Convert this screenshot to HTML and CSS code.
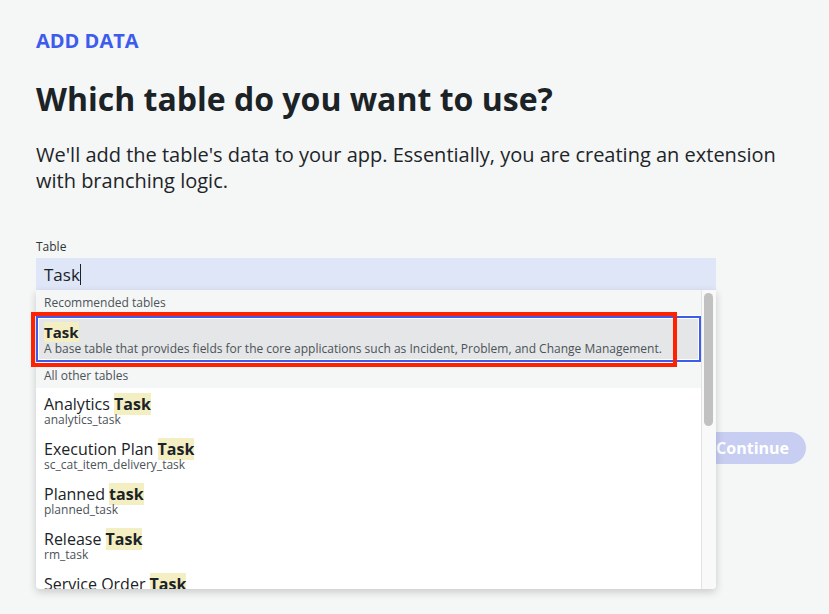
FILE: index.html
```html
<!DOCTYPE html>
<html>
<head>
<meta charset="utf-8">
<link rel="stylesheet" href="styles.css">
</head>
<body>
<main class="page">
  <div class="eyebrow">ADD DATA</div>
  <h1 class="title">Which table do you want to use?</h1>
  <p class="lead">We'll add the table's data to your app. Essentially, you are creating an extension with branching logic.</p>

  <div class="field">
    <label class="label">Table</label>
    <div class="combo">
      <div class="input"><span class="value">Task</span><span class="caret"></span></div>
      <div class="menu">
        <div class="list">
          <div class="group">Recommended tables</div>
          <div class="option selected">
            <div class="opt-title"><mark>Task</mark></div>
            <div class="opt-desc">A base table that provides fields for the core applications such as Incident, Problem, and Change Management.</div>
          </div>
          <div class="group">All other tables</div>
          <div class="option">
            <div class="opt-title">Analytics <mark>Task</mark></div>
            <div class="opt-sub">analytics_task</div>
          </div>
          <div class="option">
            <div class="opt-title">Execution Plan <mark>Task</mark></div>
            <div class="opt-sub">sc_cat_item_delivery_task</div>
          </div>
          <div class="option">
            <div class="opt-title">Planned <mark>task</mark></div>
            <div class="opt-sub">planned_task</div>
          </div>
          <div class="option">
            <div class="opt-title">Release <mark>Task</mark></div>
            <div class="opt-sub">rm_task</div>
          </div>
          <div class="option">
            <div class="opt-title">Service Order <mark>Task</mark></div>
            <div class="opt-sub">sm_task</div>
          </div>
        </div>
        <div class="scrollbar"><div class="thumb"></div></div>
      </div>
      <div class="annotation"></div>
    </div>
  </div>

  <div class="actions">
    <button class="btn">Continue</button>
  </div>
</main>
</body>
</html>
```

FILE: styles.css
```css
* { box-sizing: border-box; }
html, body { margin: 0; padding: 0; }
body {
  background: #f5f6f6;
  font-family: "Open Sans", "Noto Sans", sans-serif;
  color: #1b2327;
  width: 829px;
  height: 614px;
  overflow: hidden;
}
.page {
  padding: 29px 23px 0 36px;
}
.eyebrow {
  color: #3d5ced;
  font-weight: 700;
  font-size: 20px;
  line-height: 24px;
}
.title {
  margin: 26px 0 0;
  font-size: 32px;
  line-height: 40px;
  font-weight: 700;
  color: #1b2327;
}
.lead {
  margin: 23px 0 0;
  font-size: 20px;
  line-height: 26px;
  max-width: 760px;
  color: #1d2529;
}
.field {
  margin-top: 45px;
  width: 680px;
}
.label {
  display: block;
  font-size: 12px;
  line-height: 16px;
  color: #2e3538;
}
.combo {
  position: relative;
  margin-top: 3px;
}
.input {
  height: 32px;
  background: #dee6f7;
  padding: 0 8px;
  display: flex;
  align-items: center;
  font-size: 17px;
  color: #1b2327;
}
.caret {
  display: inline-block;
  width: 1px;
  height: 21px;
  background: #1b2327;
}
.menu {
  position: absolute;
  left: 0;
  top: 32px;
  width: 680px;
  height: 299px;
  background: #fff;
  border-radius: 0 0 4px 4px;
  box-shadow: 0 3px 8px rgba(0,0,0,0.18);
  display: flex;
  overflow: hidden;
  z-index: 2;
}
.list {
  flex: 1;
  overflow: hidden;
}
.group {
  background: #f5f6f6;
  font-size: 12px;
  line-height: 25px;
  padding: 0 8px;
  color: #4b5357;
}
.option {
  padding: 8px 8px 6px;
}
.opt-title {
  font-size: 16px;
  line-height: 17px;
  color: #1b2327;
}
.opt-sub {
  font-size: 12px;
  line-height: 14px;
  color: #4b5357;
}
.opt-desc {
  font-size: 12px;
  line-height: 15px;
  color: #4b5357;
}
mark {
  background: #f4efc3;
  color: #1b2327;
  font-weight: 700;
}
.option.selected {
  margin: 1px 0;
  border: 2px solid #3d5ced;
  box-shadow: inset 0 0 0 1px #fff;
  background: #e4e6e7;
  padding: 5px 6px 4px;
}
.option.selected .opt-title { font-size: 15px; line-height: 18px; }
.scrollbar {
  width: 15px;
  background: #f9f9f9;
  border-left: 1px solid #e3e3e3;
  padding: 3px 3px 0 2px;
}
.thumb {
  width: 9px;
  height: 133px;
  background: #c1c1c1;
  border-radius: 5px;
}
.annotation {
  position: absolute;
  left: -5px;
  top: 54px;
  width: 646px;
  height: 55px;
  border: 4px solid #ff2200;
  z-index: 3;
  pointer-events: none;
}
.actions {
  display: flex;
  justify-content: flex-end;
  margin-top: 142px;
}
.btn {
  font-family: "Open Sans", "Noto Sans", sans-serif;
  font-size: 16px;
  font-weight: 700;
  color: #fff;
  background: #c7cef2;
  border: 0;
  border-radius: 16px;
  height: 32px;
  padding: 0 17px;
}
```
